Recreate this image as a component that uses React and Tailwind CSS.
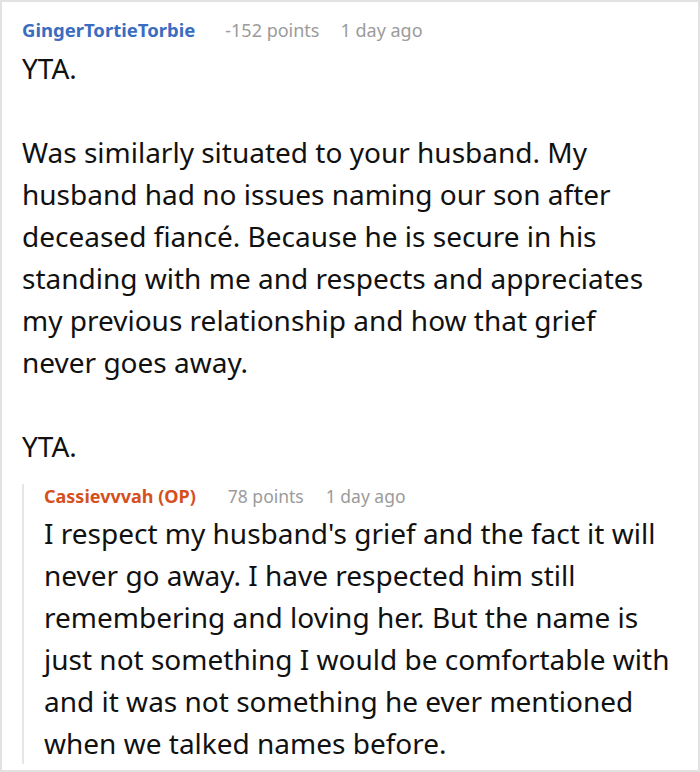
export default function App() {
  return (
    <div className="w-[700px] h-[772px] border-2 border-[#e2e2e2] bg-white overflow-hidden font-['Noto_Sans',sans-serif] text-[#111]">
      <div className="pl-5 pr-[26px] pt-4">
        {/* comment header */}
        <div className="flex items-baseline leading-[24px]">
          <span className="text-[18.5px] font-bold text-[#3a6cbf]">GingerTortieTorbie</span>
          <span className="ml-[30px] text-[18px] text-[#9b9b9b]">-152 points</span>
          <span className="ml-[21px] text-[18px] text-[#9b9b9b]">1 day ago</span>
        </div>
        <div className="text-[28px] leading-[42px] mt-[5px]">
          <p>YTA.</p>
          <p className="mt-[42px]">
            Was similarly situated to your husband. My husband had no issues naming our son after deceased fiancé. Because he is secure in his standing with me and respects and appreciates my previous relationship and how that grief never goes away.
          </p>
          <p className="mt-[42px]">YTA.</p>
        </div>

        {/* reply */}
        <div className="mt-[17px] border-l-2 border-[#e6e6e6] pl-5">
          <div className="flex items-baseline leading-[24px]">
            <span className="text-[18px] font-bold text-[#d4511d]">Cassievvvah (OP)</span>
            <span className="ml-[32px] text-[17.5px] text-[#9b9b9b]">78 points</span>
            <span className="ml-[22px] text-[17.5px] text-[#9b9b9b]">1 day ago</span>
          </div>
          <p className="text-[28px] leading-[42px] mt-1">
            I respect my husband's grief and the fact it will never go away. I have respected him still remembering and loving her. But the name is just not something I would be comfortable with and it was not something he ever mentioned when we talked names before.
          </p>
        </div>
      </div>
    </div>
  );
}
